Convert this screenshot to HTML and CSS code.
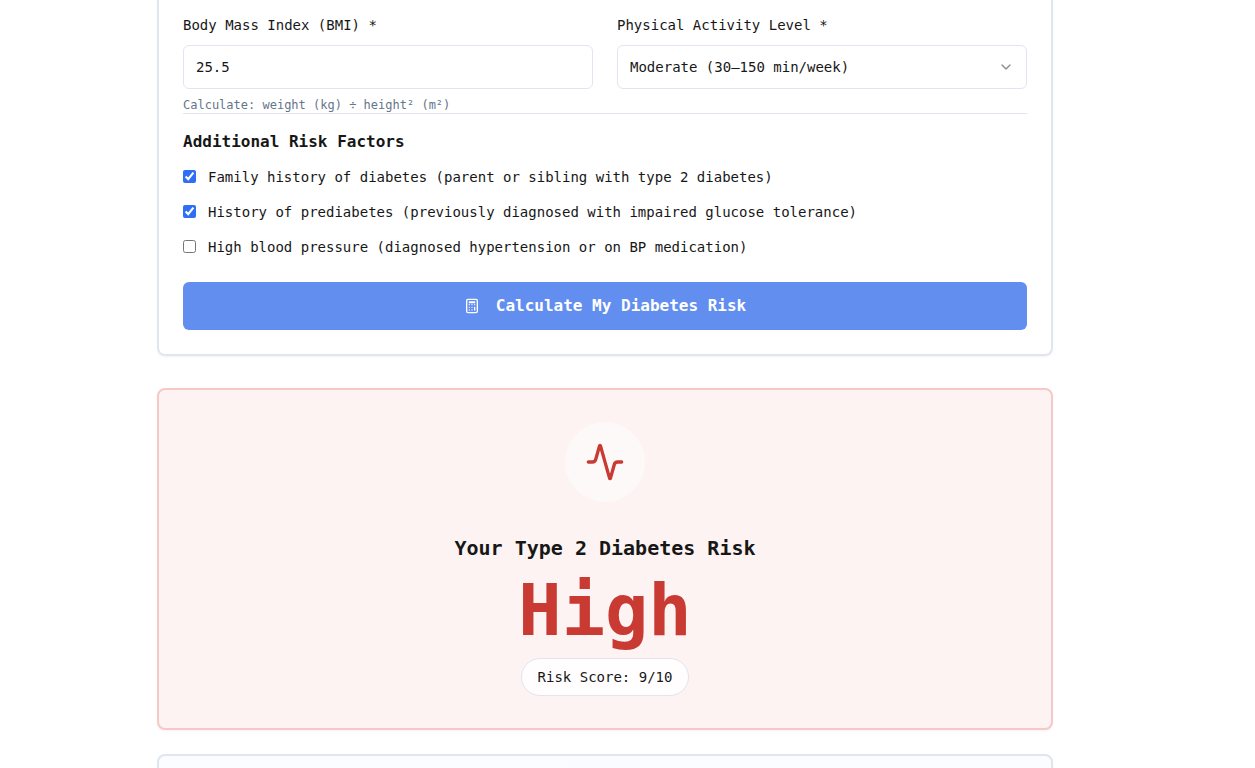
FILE: index.html
```html
<!DOCTYPE html>
<html lang="en">
<head>
<meta charset="utf-8">
<meta name="viewport" content="width=device-width, initial-scale=1">
<title>Diabetes Risk Calculator</title>
<link rel="stylesheet" href="styles.css">
</head>
<body>
<main class="page">
  <form class="card form-card">
    <div class="fields">
      <div class="field">
        <label for="bmi">Body Mass Index (BMI) *</label>
        <input class="control" id="bmi" type="text" inputmode="decimal" value="25.5" aria-describedby="bmi-hint">
        <p class="hint" id="bmi-hint">Calculate: weight (kg) ÷ height² (m²)</p>
      </div>
      <div class="field">
        <label for="activity">Physical Activity Level *</label>
        <div class="select-wrap">
          <select class="control" id="activity">
            <option>Moderate (30–150 min/week)</option>
          </select>
          <svg class="chevron" viewBox="0 0 24 24" aria-hidden="true"><path d="m6 9 6 6 6-6"/></svg>
        </div>
      </div>
    </div>
    <section class="factors">
      <h2 class="factors-title">Additional Risk Factors</h2>
      <div class="check-row">
        <input type="checkbox" id="family" checked>
        <label for="family">Family history of diabetes (parent or sibling with type 2 diabetes)</label>
      </div>
      <div class="check-row">
        <input type="checkbox" id="prediabetes" checked>
        <label for="prediabetes">History of prediabetes (previously diagnosed with impaired glucose tolerance)</label>
      </div>
      <div class="check-row">
        <input type="checkbox" id="pressure">
        <label for="pressure">High blood pressure (diagnosed hypertension or on BP medication)</label>
      </div>
    </section>
    <button class="submit" type="button">
      <svg class="calc-icon" viewBox="0 0 24 24" aria-hidden="true"><rect width="16" height="20" x="4" y="2" rx="2"/><path d="M8 6h8M8 7h8M16 14v4M16 10h.01M12 10h.01M8 10h.01M12 14h.01M8 14h.01M12 18h.01M8 18h.01"/></svg>
      <span>Calculate My Diabetes Risk</span>
    </button>
  </form>

  <section class="card result-card">
    <div class="result-icon">
      <svg viewBox="0 0 24 24" aria-hidden="true"><path d="M22 12h-2.48a2 2 0 0 0-1.93 1.46l-2.35 8.36a.25.25 0 0 1-.48 0L9.24 2.18a.25.25 0 0 0-.48 0l-2.35 8.36A2 2 0 0 1 4.49 12H2"/></svg>
    </div>
    <h2 class="result-title">Your Type 2 Diabetes Risk</h2>
    <p class="result-level">High</p>
    <p class="score">Risk Score: 9/10</p>
  </section>

  <section class="card next-card"></section>
</main>
</body>
</html>
```
FILE: styles.css
```css
* {
  box-sizing: border-box;
}

body {
  margin: 0;
  background: #fff;
  color: #171717;
  font: 14px/20px "DejaVu Sans Mono", monospace;
}

h2,
p {
  margin: 0;
}

.page {
  height: 100vh;
  overflow: hidden;
  padding: 0 45px 0 0;
}

.card {
  max-width: 896px;
  margin: 0 auto;
  border: 2px solid #e1e5ef;
  border-radius: 8px;
  box-shadow: 0 1px 2px rgba(0, 0, 0, 0.05);
}

.form-card {
  padding: 15px 24px 24px;
  border-top: 0;
  border-top-left-radius: 0;
  border-top-right-radius: 0;
}

.fields {
  display: grid;
  grid-template-columns: 1fr 1fr;
  gap: 24px;
}

.field label {
  display: block;
  margin-bottom: 10px;
}

.control {
  display: block;
  width: 100%;
  height: 44px;
  padding: 0 12px;
  border: 1px solid #e1e5ef;
  border-radius: 6px;
  background: #fff;
  color: #171717;
  font: inherit;
  appearance: none;
}

.select-wrap {
  position: relative;
}

.chevron {
  position: absolute;
  top: 14px;
  right: 13px;
  width: 16px;
  height: 16px;
  fill: none;
  stroke: #8b8b8b;
  stroke-width: 2;
  stroke-linecap: round;
  stroke-linejoin: round;
  pointer-events: none;
}

.hint {
  margin-top: 8px;
  color: #65758b;
  font-size: 12px;
  line-height: 16px;
}

.factors {
  display: flex;
  flex-direction: column;
  gap: 12px;
  padding-top: 16px;
  border-top: 1px solid #e1e5ef;
}

.factors-title {
  font-size: 16px;
  line-height: 24px;
}

.check-row {
  display: flex;
  align-items: flex-start;
  gap: 12px;
  line-height: 23px;
}

.check-row input {
  width: 13px;
  height: 13px;
  margin: 4px 0 0;
  accent-color: #2f6ff5;
}

.submit {
  display: flex;
  align-items: center;
  justify-content: center;
  gap: 16px;
  width: 100%;
  height: 48px;
  margin-top: 23px;
  border: 0;
  border-radius: 6px;
  background: #628ef0;
  color: #fff;
  font: bold 16px/24px "DejaVu Sans Mono", monospace;
}

.calc-icon {
  width: 16px;
  height: 16px;
  fill: none;
  stroke: currentColor;
  stroke-width: 2;
  stroke-linecap: round;
  stroke-linejoin: round;
}

.result-card {
  display: flex;
  flex-direction: column;
  align-items: center;
  margin-top: 32px;
  padding: 32px;
  border-color: #f6c9c8;
  background: #fdf3f2;
}

.result-icon {
  display: grid;
  place-items: center;
  width: 80px;
  height: 80px;
  border-radius: 50%;
  background: #fdf9f8;
}

.result-icon svg {
  width: 40px;
  height: 40px;
  fill: none;
  stroke: #c93a32;
  stroke-width: 2;
  stroke-linecap: round;
  stroke-linejoin: round;
}

.result-title {
  margin-top: 32px;
  font-size: 20px;
  line-height: 28px;
}

.result-level {
  margin: 12px 0;
  color: #c93a32;
  font-size: 72px;
  font-weight: bold;
  line-height: 72px;
}

.score {
  padding: 8px 16px;
  border: 1px solid #e1e5ef;
  border-radius: 20px;
  background: #fffdfe;
}

.next-card {
  min-height: 120px;
  margin-top: 24px;
  background: radial-gradient(150px 60px at 50% 60px, #f6f7fa, #fafcff) #fafcff;
}
```
